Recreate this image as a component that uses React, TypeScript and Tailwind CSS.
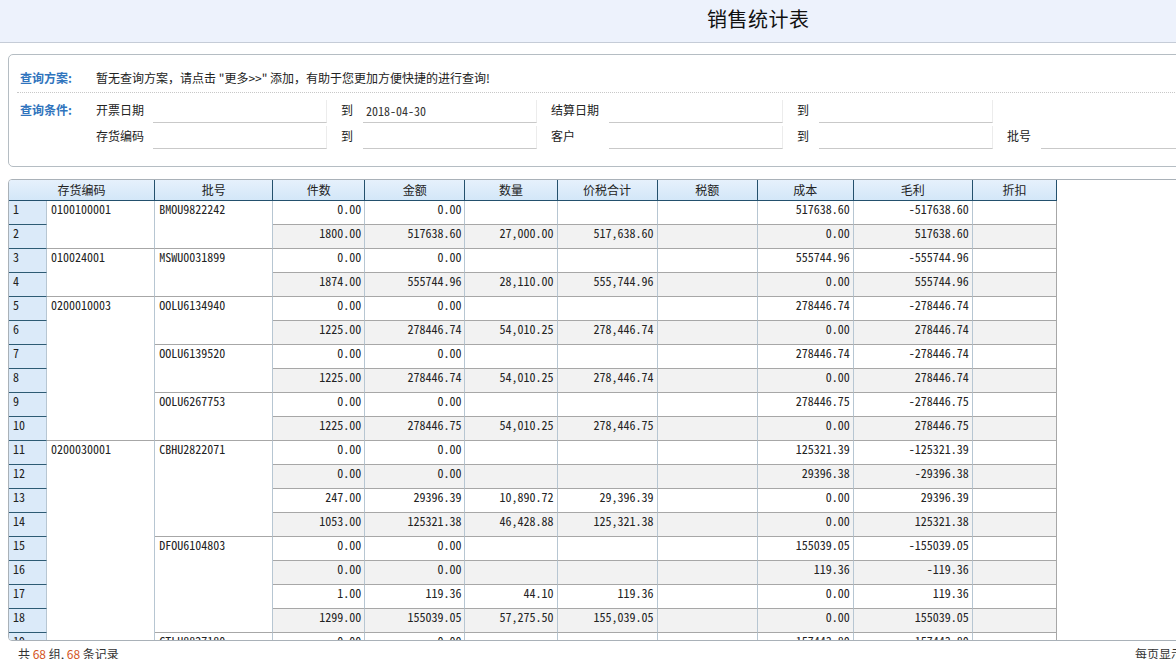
import React from "react";

type Span = { text: string; span: number };
type Row = { code?: Span; batch?: Span; v: string[] };

const A = (cost: string, gp: string, q = "0.00", amt = "0.00") => [q, amt, "", "", "", cost, gp, ""];
const B = (q: string, amt: string, num: string, tot: string, gp: string, cost = "0.00") => [q, amt, num, tot, "", cost, gp, ""];

const rows: Row[] = [
  { code: { text: "0100100001", span: 2 }, batch: { text: "BMOU9822242", span: 2 }, v: A("517638.60", "-517638.60") },
  { v: B("1800.00", "517638.60", "27,000.00", "517,638.60", "517638.60") },
  { code: { text: "010024001", span: 2 }, batch: { text: "MSWU0031899", span: 2 }, v: A("555744.96", "-555744.96") },
  { v: B("1874.00", "555744.96", "28,110.00", "555,744.96", "555744.96") },
  { code: { text: "0200010003", span: 6 }, batch: { text: "OOLU6134940", span: 2 }, v: A("278446.74", "-278446.74") },
  { v: B("1225.00", "278446.74", "54,010.25", "278,446.74", "278446.74") },
  { batch: { text: "OOLU6139520", span: 2 }, v: A("278446.74", "-278446.74") },
  { v: B("1225.00", "278446.74", "54,010.25", "278,446.74", "278446.74") },
  { batch: { text: "OOLU6267753", span: 2 }, v: A("278446.75", "-278446.75") },
  { v: B("1225.00", "278446.75", "54,010.25", "278,446.75", "278446.75") },
  { code: { text: "0200030001", span: 10 }, batch: { text: "CBHU2822071", span: 4 }, v: A("125321.39", "-125321.39") },
  { v: A("29396.38", "-29396.38") },
  { v: B("247.00", "29396.39", "10,890.72", "29,396.39", "29396.39") },
  { v: B("1053.00", "125321.38", "46,428.88", "125,321.38", "125321.38") },
  { batch: { text: "DFOU6104803", span: 4 }, v: A("155039.05", "-155039.05") },
  { v: A("119.36", "-119.36") },
  { v: B("1.00", "119.36", "44.10", "119.36", "119.36") },
  { v: B("1299.00", "155039.05", "57,275.50", "155,039.05", "155039.05") },
  { batch: { text: "CTLU8827180", span: 2 }, v: A("157443.80", "-157443.80") },
  { v: B("1265.00", "157443.80", "55,120.00", "157,443.80", "157443.80") },
];

const widths = [38, 108, 118, 92, 100, 92, 100, 100, 96, 119, 84];
const heads = ["批号", "件数", "金额", "数量", "价税合计", "税额", "成本", "毛利", "折扣"];

const mono = "font-['Noto_Sans_Mono_CJK_SC','Liberation_Mono',monospace]";

function Field({ w, value }: { w: number; value?: string }) {
  return (
    <div
      className="shrink-0 h-[23px] mt-[2px] border-b border-[#c9c9c9] border-r border-r-[#ececec] flex items-center pl-[3px] text-[#333] font-['Noto_Sans_Mono_CJK_SC','Liberation_Mono',monospace]"
      style={{ width: w }}
    >
      {value}
    </div>
  );
}

function Lbl({ w, children, pl = 14 }: { w: number; children: React.ReactNode; pl?: number }) {
  return (
    <div className="shrink-0 whitespace-nowrap" style={{ width: w, paddingLeft: pl }}>
      {children}
    </div>
  );
}

export default function App() {
  return (
    <div className="w-[1176px] h-[659px] overflow-hidden bg-white text-[12px] text-[#222] font-['Noto_Sans_CJK_SC',sans-serif]">
      {/* banner */}
      <div className="h-[43px] bg-[#edf2fc] border-b border-[#c5ccd7] flex items-center pl-[707px] pb-[4px]">
        <h1 className="text-[20px] leading-none text-[#111] tracking-[0.5px]">销售统计表</h1>
      </div>

      {/* query panel */}
      <div className="pl-[8px] pt-[11px]">
        <div className="w-[1200px] h-[113px] border border-[#b5bdc3] rounded-l-[5px] pt-[10px]">
          <div className="flex items-center h-[28px] ml-[8px] pl-[3px] pb-[1px] border-b border-dotted border-[#c8c8c8]">
            <div className="w-[76px] shrink-0 font-bold text-[#2f74bd]">查询方案:</div>
            <div className="whitespace-nowrap">暂无查询方案，请点击 "更多&gt;&gt;" 添加，有助于您更加方便快捷的进行查询!</div>
          </div>
          <div className="flex pl-[11px] pt-[4px]">
            <div className="w-[76px] shrink-0 h-[26px] flex items-center font-bold text-[#2f74bd]">查询条件:</div>
            <div className="flex flex-col shrink-0">
              <div className="flex items-center h-[26px]">
                <Lbl w={57} pl={0}>开票日期</Lbl>
                <Field w={174} />
                <Lbl w={36}>到</Lbl>
                <Field w={174} value="2018-04-30" />
                <Lbl w={72}>结算日期</Lbl>
                <Field w={174} />
                <Lbl w={36}>到</Lbl>
                <Field w={174} />
              </div>
              <div className="flex items-center h-[26px]">
                <Lbl w={57} pl={0}>存货编码</Lbl>
                <Field w={174} />
                <Lbl w={36}>到</Lbl>
                <Field w={174} />
                <Lbl w={72}>客户</Lbl>
                <Field w={174} />
                <Lbl w={36}>到</Lbl>
                <Field w={174} />
                <Lbl w={48}>批号</Lbl>
                <Field w={174} />
              </div>
            </div>
          </div>
        </div>
      </div>

      {/* table */}
      <div className="pl-[8px] pt-[12px]">
        <div className="w-[1200px] h-[462px] border border-[#a9b1b8] rounded-l-[4px] overflow-hidden">
          <table className="table-fixed border-separate border-spacing-0" style={{ width: 1048 }}>
            <colgroup>
              {widths.map((w, i) => (
                <col key={i} style={{ width: w }} />
              ))}
            </colgroup>
            <thead>
              <tr>
                <th
                  colSpan={2}
                  className="h-[21px] p-0 font-normal text-center bg-gradient-to-b from-[#e6f1fc] to-[#d3e7f8] border-b border-r border-[#23506d]"
                >
                  存货编码
                </th>
                {heads.map((h) => (
                  <th
                    key={h}
                    className="h-[21px] p-0 font-normal text-center bg-gradient-to-b from-[#e6f1fc] to-[#d3e7f8] border-b border-r border-[#23506d]"
                  >
                    {h}
                  </th>
                ))}
              </tr>
            </thead>
            <tbody>
              {rows.map((r, i) => {
                const even = i % 2 === 1;
                return (
                  <tr key={i}>
                    <td className="h-[24px] p-0 pl-[4px] pt-[1px] align-top leading-[14px] bg-[#dbeaf9] border-b border-b-[#2d5b74] border-r border-r-[#b7c6d2] text-[#222]">
                      <span className={mono}>{i + 1}</span>
                    </td>
                    {r.code && (
                      <td
                        rowSpan={r.code.span}
                        className={`p-0 pl-[4px] pt-[1px] align-top leading-[14px] bg-white border-b border-b-[#a7a7a7] border-r border-r-[#b7c6d2] ${mono}`}
                      >
                        {r.code.text}
                      </td>
                    )}
                    {r.batch && (
                      <td
                        rowSpan={r.batch.span}
                        className={`p-0 pl-[4px] pt-[1px] align-top leading-[14px] bg-white border-b border-b-[#a7a7a7] border-r border-r-[#b7c6d2] ${mono}`}
                      >
                        {r.batch.text}
                      </td>
                    )}
                    {r.v.map((v, j) => (
                      <td
                        key={j}
                        className={`h-[24px] p-0 pr-[3px] pt-[1px] align-top text-right leading-[14px] border-b border-b-[#a7a7a7] border-r ${
                          j === 7 ? "border-r-[#a7a7a7]" : "border-r-[#b7c6d2]"
                        } ${even ? "bg-[#f2f2f2]" : "bg-white"} ${mono}`}
                      >
                        {v}
                      </td>
                    ))}
                  </tr>
                );
              })}
            </tbody>
          </table>
        </div>
      </div>

      {/* footer */}
      <div className="flex pt-[6px] leading-[14px] text-[#333] whitespace-nowrap">
        <div className="w-[1135px] pl-[18px] shrink-0">
          共 <span className="text-[#d4541c]">68</span> 组, <span className="text-[#d4541c]">68</span> 条记录
        </div>
        <div className="shrink-0">每页显示 20 条</div>
      </div>
    </div>
  );
}
